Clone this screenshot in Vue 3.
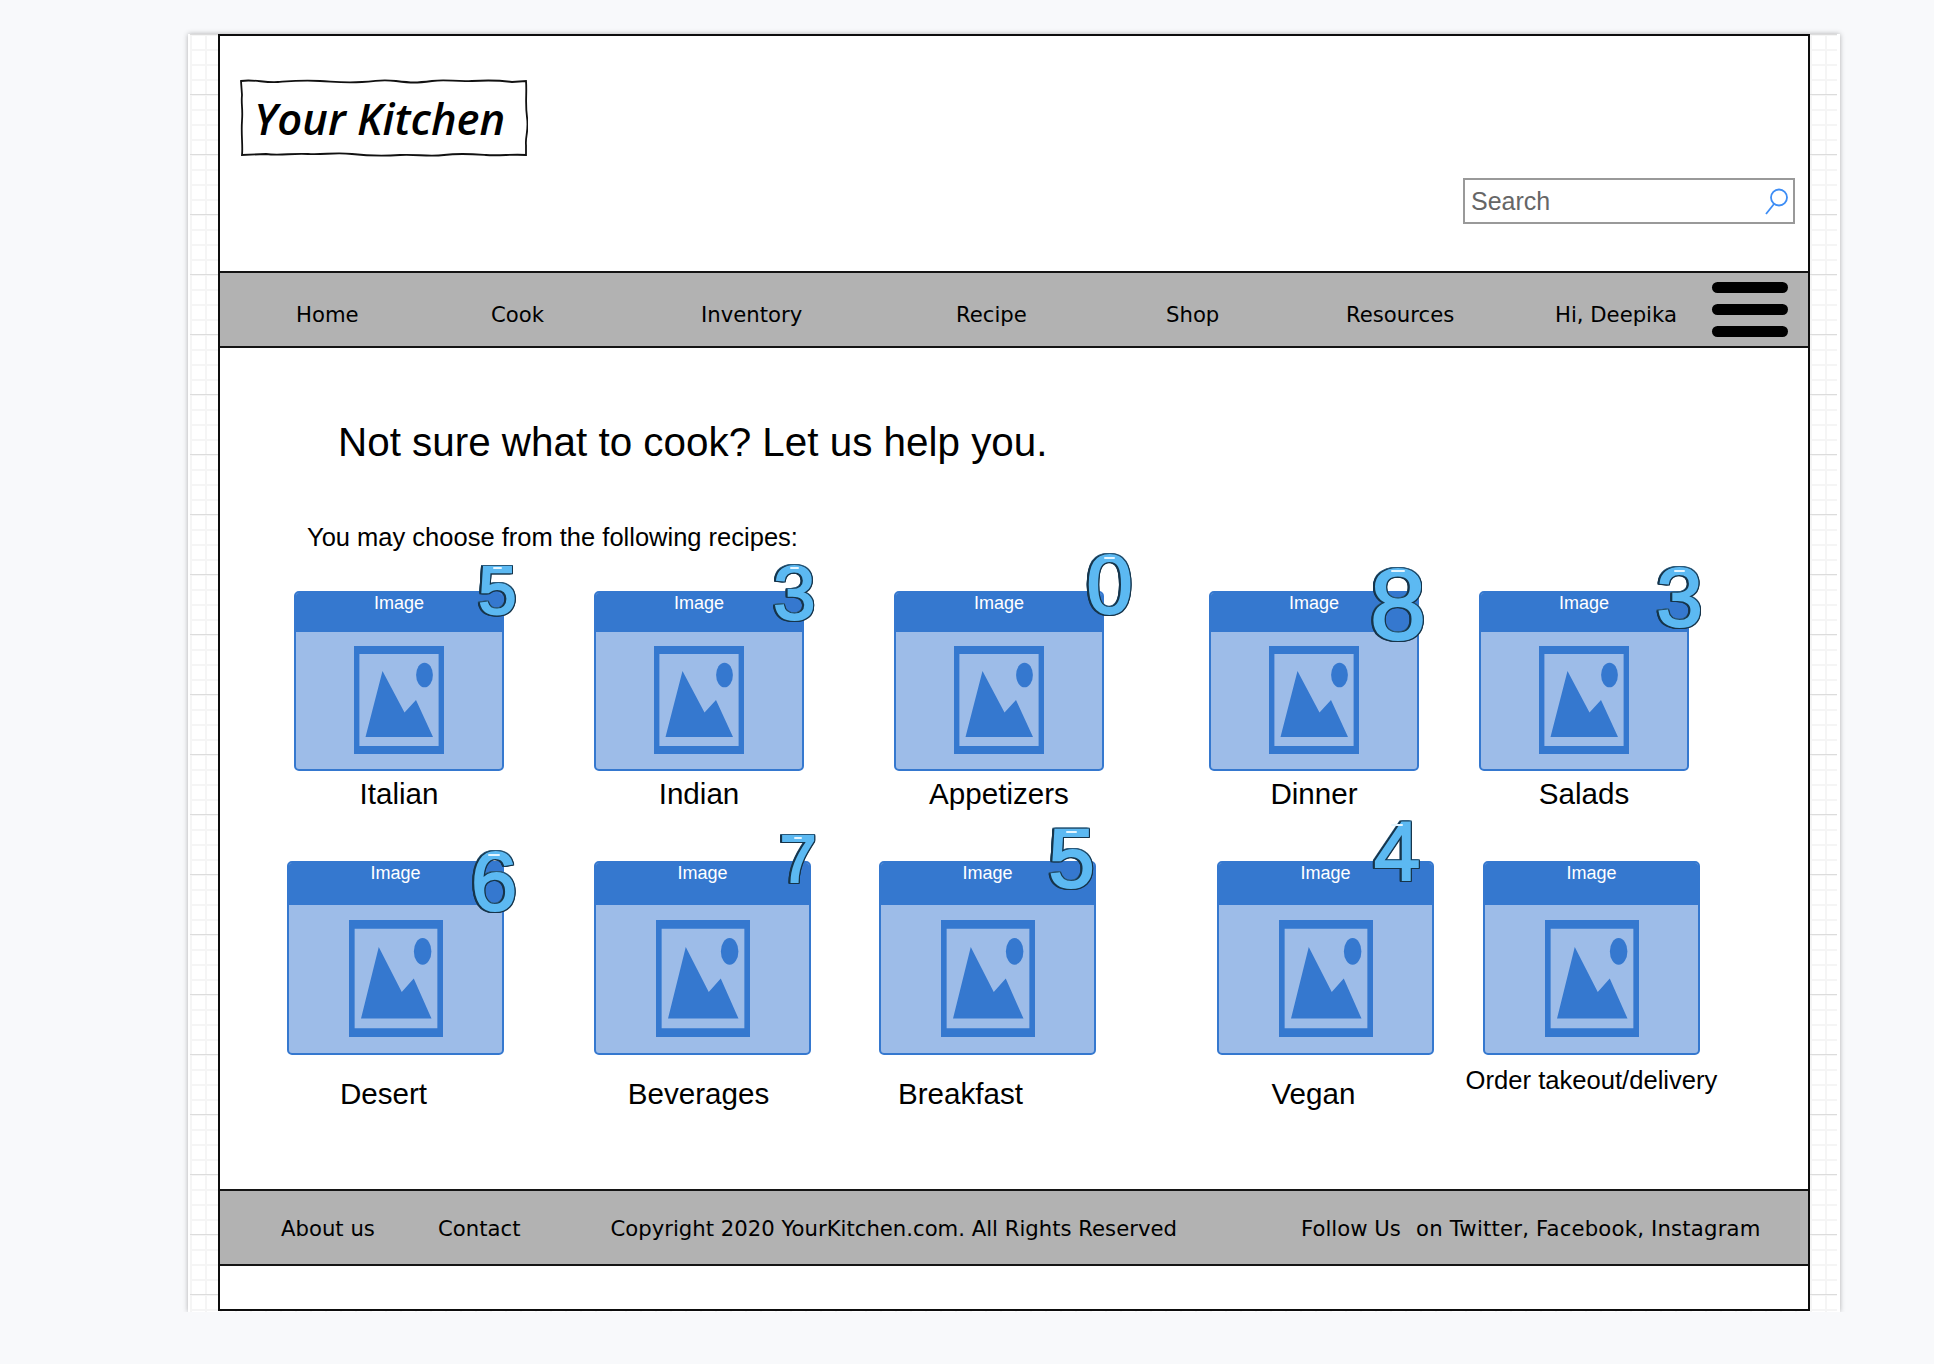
<script setup>
const navItems = [
  { label: "Home", width: 195 },
  { label: "Cook", width: 210 },
  { label: "Inventory", width: 255 },
  { label: "Recipe", width: 210 },
  { label: "Shop", width: 180 },
  { label: "Resources", width: 209 },
  { label: "Hi, Deepika", width: 157 },
];

const footerItems = [
  { label: "About us", width: 157 },
  { label: "Contact", width: 172.5 },
  { label: "Copyright 2020 YourKitchen.com. All Rights Reserved", width: 690.5 },
  { label: "Follow Us", width: 115 },
  { label: "on Twitter, Facebook, Instagram", width: 350 },
];

// gap = space before the card, badge box is relative to the card
const topRow = [
  { name: "Italian", gap: 0, badge: { n: 5, x: 184, y: -28, w: 39, h: 54, size: 69 } },
  { name: "Indian", gap: 90, badge: { n: 3, x: 180, y: -28, w: 41, h: 60, size: 76 } },
  { name: "Appetizers", gap: 90, badge: { n: 0, x: 193, y: -39, w: 45, h: 65, size: 83 } },
  { name: "Dinner", gap: 105, badge: { n: 8, x: 161, y: -26, w: 56, h: 78, size: 101 } },
  { name: "Salads", gap: 60, badge: { n: 3, x: 178, y: -26, w: 45, h: 65, size: 83 } },
];

const bottomRow = [
  { name: "Desert", gap: 0, shift: 24, badge: { n: 6, x: 184, y: -12, w: 46, h: 65, size: 83 } },
  { name: "Beverages", gap: 90, shift: 8, badge: { n: 7, x: 186, y: -28, w: 36, h: 51, size: 66 } },
  { name: "Breakfast", gap: 68, shift: 54, badge: { n: 5, x: 170, y: -35, w: 45, h: 65, size: 83 } },
  { name: "Vegan", gap: 121, shift: 24, badge: { n: 4, x: 155, y: -42, w: 50, h: 65, size: 83 } },
  { name: "Order takeout/delivery", gap: 49, small: true },
];

const rows = [
  { cls: "row-top", items: topRow },
  { cls: "row-bottom", items: bottomRow },
];

function badgeStyle(b) {
  return {
    left: b.x + "px",
    top: b.y + "px",
    width: b.w + "px",
    height: b.h + "px",
    fontSize: b.size + "px",
  };
}
</script>

<template>
  <div class="canvas">
    <div class="frame">
      <header class="top">
        <div class="logo">
          <svg class="logo-box" viewBox="0 0 288 78" preserveAspectRatio="none">
            <path
              d="M1 2 C14 0 24 4 38 3 S62 1 80 2 S104 4 122 3 S140 0 156 2 S176 4 192 2 S214 3 232 2 S258 1 272 3 L286 2 C287 14 285 24 287 38 S285 58 286 66 L286 76 C272 75 260 77 246 76 S220 74 204 76 S176 75 160 76 S130 77 112 75 S84 76 68 75 S40 77 26 75 L2 76 C3 66 1 56 2 42 S1 26 2 16 Z"
            />
          </svg>
          <span class="logo-text">Your Kitchen</span>
        </div>
        <div class="search">
          <span class="search-text">Search</span>
          <svg class="search-icon" width="24" height="30" viewBox="0 0 24 30">
            <circle cx="15" cy="10.5" r="8" />
            <path d="M10 17 L2 27" />
          </svg>
        </div>
      </header>

      <nav class="bar nav">
        <span v-for="item in navItems" :key="item.label" class="nav-item" :style="{ width: item.width + 'px' }">{{ item.label }}</span>
        <div class="burger">
          <i></i><i></i><i></i>
        </div>
      </nav>

      <main class="main">
        <h1 class="title">Not sure what to cook? Let us help you.</h1>
        <p class="intro">You may choose from the following recipes:</p>

        <div v-for="row in rows" :key="row.cls" class="row" :class="row.cls">
          <div
            v-for="card in row.items"
            :key="card.name"
            class="card"
            :style="{ marginLeft: card.gap + 'px' }"
          >
            <div class="thumb">
              <div class="thumb-head">Image</div>
              <div class="thumb-body">
                <svg class="pic" viewBox="0 0 90 108" preserveAspectRatio="none">
                  <path class="pic-frame" fill-rule="evenodd" d="M0 0H90V108H0Z M5.4 8V100H84.6V8Z" />
                  <path class="pic-frame" d="M11.5 91 L28.5 25 L50.5 66.5 L62 54 L79 91 Z" />
                  <ellipse class="pic-frame" cx="70.5" cy="29" rx="8.4" ry="12.3" />
                </svg>
              </div>
            </div>
            <span v-if="card.badge" class="badge" :style="badgeStyle(card.badge)">
              <span class="digit">{{ card.badge.n }}</span>
            </span>
            <div
              class="card-label"
              :class="{ small: card.small }"
              :style="{ paddingRight: (card.shift || 0) + 'px' }"
            >{{ card.name }}</div>
          </div>
        </div>
      </main>

      <footer class="bar foot">
        <span v-for="item in footerItems" :key="item.label" class="foot-item" :style="{ width: item.width + 'px' }">{{ item.label }}</span>
      </footer>
      <div class="tail"></div>
    </div>
  </div>
</template>

<style>
html {
  overflow: hidden;
}

html,
body {
  margin: 0;
  background: #f8f9fb;
}
</style>

<style scoped>
.canvas {
  box-sizing: border-box;
  width: 1652px;
  height: 1278px;
  margin: 34px 0 0 188px;
  padding-left: 28px;
  border-left: 2px solid #fff;
  border-right: 3px solid #fff;
  background-color: #fff;
  background-image:
    linear-gradient(#dcdcdc 1px, transparent 1px),
    linear-gradient(#f5f5f5 2px, transparent 2px),
    linear-gradient(90deg, #f5f5f5 2px, transparent 2px);
  background-size: 100% 60px, 100% 15px, 15px 100%;
  box-shadow: 0 0 5px rgba(0, 0, 0, 0.3);
}

.frame {
  box-sizing: border-box;
  width: 1592px;
  height: 1277px;
  border: 2px solid #0d0d0d;
  background: #fff;
  display: flex;
  flex-direction: column;
}

.top {
  height: 235px;
  flex: none;
  display: flex;
  justify-content: space-between;
  align-items: flex-start;
}

.logo {
  position: relative;
  width: 288px;
  height: 78px;
  margin: 43px 0 0 20px;
  display: flex;
  align-items: center;
}

.logo-box {
  position: absolute;
  inset: 0;
  width: 100%;
  height: 100%;
  fill: none;
  stroke: #111;
  stroke-width: 1.8;
}

.logo-text {
  position: relative;
  margin: 0 0 0 14px;
  font-family: "Open Sans", "Lato", sans-serif;
  font-weight: 600;
  font-style: italic;
  font-size: 43.5px;
  color: #000;
  white-space: nowrap;
}

.search {
  box-sizing: border-box;
  width: 332px;
  height: 46px;
  margin: 142px 13px 0 0;
  padding: 1px 5px 0 6px;
  border: 2px solid #999;
  display: flex;
  align-items: center;
  justify-content: space-between;
}

.search-text {
  font-family: "Liberation Sans", Arial, sans-serif;
  font-size: 25px;
  color: #666;
}

.search-icon {
  fill: none;
  stroke: #3d8df5;
  stroke-width: 1.8;
}

.bar {
  box-sizing: border-box;
  height: 77px;
  flex: none;
  background: #b2b2b2;
  border-top: 2px solid #141414;
  border-bottom: 2px solid #141414;
  display: flex;
  font-family: "DejaVu Sans", Verdana, sans-serif;
  font-size: 21.2px;
  color: #000;
}

.nav {
  padding-left: 76px;
  align-items: center;
}

.nav-item {
  flex: none;
  padding-top: 9px;
  white-space: nowrap;
}

.burger {
  display: flex;
  flex-direction: column;
  gap: 11px;
}

.burger i {
  display: block;
  width: 76px;
  height: 11px;
  border-radius: 6px;
  background: #000;
}

.main {
  flex: 1;
  font-family: "Liberation Sans", Arial, sans-serif;
  color: #000;
}

.title {
  margin: 72px 0 0 118px;
  font-size: 40.4px;
  line-height: 44px;
  font-weight: 400;
}

.intro {
  margin: 58px 0 39px 87px;
  font-size: 25.5px;
  line-height: 30px;
}

.row {
  display: flex;
  height: 270px;
}

.row-top {
  padding-left: 74px;
}

.row-bottom {
  padding-left: 67px;
}

.card {
  position: relative;
  flex: none;
  display: flex;
  flex-direction: column;
  align-items: center;
}

.thumb {
  box-sizing: border-box;
  border: 2px solid #3578cf;
  border-radius: 5px;
  background: #9dbce8;
  display: flex;
  flex-direction: column;
  overflow: hidden;
}

.row-top .card {
  width: 210px;
}

.row-top .thumb {
  width: 210px;
  height: 180px;
}

.row-top .thumb-head {
  height: 39px;
}

.row-top .pic {
  width: 90px;
  height: 108px;
}

.row-bottom .card {
  width: 217px;
}

.row-bottom .thumb {
  width: 217px;
  height: 194px;
}

.row-bottom .thumb-head {
  height: 42px;
}

.row-bottom .pic {
  width: 94px;
  height: 117px;
}

.thumb-head {
  flex: none;
  background: #3578cf;
  color: #fff;
  font-size: 18px;
  line-height: 21px;
  text-align: center;
}

.thumb-body {
  flex: 1;
  display: flex;
  align-items: center;
  justify-content: center;
  padding-bottom: 1px;
}

.pic-frame {
  fill: #3578cf;
}

.badge {
  position: absolute;
  display: flex;
  align-items: center;
  justify-content: center;
  line-height: 1;
  font-family: "Liberation Sans", Arial, sans-serif;
}

.digit {
  color: #5cb9f2;
  -webkit-text-stroke: 2px #5cb9f2;
  filter: drop-shadow(1.3px 0 0 #16344a) drop-shadow(-1.3px 0 0 #16344a) drop-shadow(0 1.3px 0 #16344a) drop-shadow(0 -1px 0 #2a5a7c);
}

/* the small shine on the numbers */
.badge::after {
  content: "";
  position: absolute;
  left: 38%;
  top: 7%;
  width: 24%;
  height: 2px;
  border-radius: 1px;
  background: #e6f6ff;
}

.card-label {
  font-size: 29.6px;
  line-height: 34px;
  white-space: nowrap;
  margin-top: 6px;
}

.row-bottom .card-label {
  margin-top: 22px;
}

.row-bottom .card-label.small {
  font-size: 25.6px;
  line-height: 30px;
  margin-top: 10px;
}

.foot {
  padding-left: 61px;
  padding-top: 1px;
  align-items: center;
}

.foot-item {
  flex: none;
  white-space: nowrap;
}

.foot-item:last-child {
  letter-spacing: 0.2px;
}

.tail {
  height: 43px;
  flex: none;
}
</style>
